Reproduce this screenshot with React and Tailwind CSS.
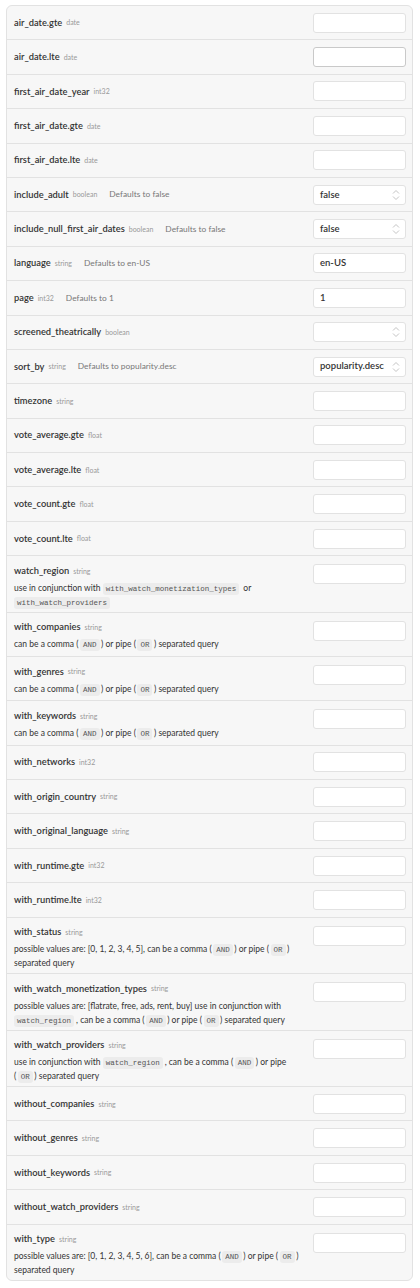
import { Fragment } from 'react';

const AND_OR = ['can be a comma ', { paren: 'AND' }, ' or pipe ', { paren: 'OR' }, ' separated query'];

const rows = [
  { name: 'air_date.gte', type: 'date' },
  { name: 'air_date.lte', type: 'date', hover: true },
  { name: 'first_air_date_year', type: 'int32' },
  { name: 'first_air_date.gte', type: 'date' },
  { name: 'first_air_date.lte', type: 'date' },
  { name: 'include_adult', type: 'boolean', def: 'false', select: 'false' },
  { name: 'include_null_first_air_dates', type: 'boolean', def: 'false', select: 'false' },
  { name: 'language', type: 'string', def: 'en-US', value: 'en-US' },
  { name: 'page', type: 'int32', def: '1', value: '1' },
  { name: 'screened_theatrically', type: 'boolean', select: '' },
  { name: 'sort_by', type: 'string', def: 'popularity.desc', select: 'popularity.desc' },
  { name: 'timezone', type: 'string' },
  { name: 'vote_average.gte', type: 'float' },
  { name: 'vote_average.lte', type: 'float' },
  { name: 'vote_count.gte', type: 'float' },
  { name: 'vote_count.lte', type: 'float' },
  { name: 'watch_region', type: 'string', desc: ['use in conjunction with ', { code: 'with_watch_monetization_types' }, ' or ', { code: 'with_watch_providers' }] },
  { name: 'with_companies', type: 'string', desc: AND_OR },
  { name: 'with_genres', type: 'string', desc: AND_OR },
  { name: 'with_keywords', type: 'string', desc: AND_OR },
  { name: 'with_networks', type: 'int32' },
  { name: 'with_origin_country', type: 'string' },
  { name: 'with_original_language', type: 'string' },
  { name: 'with_runtime.gte', type: 'int32' },
  { name: 'with_runtime.lte', type: 'int32' },
  { name: 'with_status', type: 'string', desc: ['possible values are: [0, 1, 2, 3, 4, 5], ', ...AND_OR] },
  { name: 'with_watch_monetization_types', type: 'string', desc: ['possible values are: [flatrate, free, ads, rent, buy] use in conjunction with ', { code: 'watch_region' }, ', ', ...AND_OR] },
  { name: 'with_watch_providers', type: 'string', desc: ['use in conjunction with ', { code: 'watch_region' }, ', ', ...AND_OR] },
  { name: 'without_companies', type: 'string' },
  { name: 'without_genres', type: 'string' },
  { name: 'without_keywords', type: 'string' },
  { name: 'without_watch_providers', type: 'string' },
  { name: 'with_type', type: 'string', desc: ['possible values are: [0, 1, 2, 3, 4, 5, 6], ', ...AND_OR] },
];

function Chevrons() {
  return (
    <svg width="8" height="12" viewBox="0 0 8 12" fill="none" stroke="#c4c4c4" strokeWidth="1" className="shrink-0">
      <path d="M1 4.5 L4 1.5 L7 4.5" />
      <path d="M1 7.5 L4 10.5 L7 7.5" />
    </svg>
  );
}

function Field({ row }) {
  const base = 'flex h-[20px] w-[93px] shrink-0 items-center rounded-[3px] border bg-white pl-[6px] pr-[5px] text-[9.5px] text-[#333]';
  if (row.select !== undefined) {
    return (
      <div className={base + ' justify-between border-[#e2e2e2]'}>
        <span className="font-semibold">{row.select}</span>
        <Chevrons />
      </div>
    );
  }
  return (
    <div className={base + (row.hover ? ' border-[#c9c9c9]' : ' border-[#e2e2e2]')}>
      <span className="font-semibold">{row.value}</span>
    </div>
  );
}

function Code({ children, className = '' }) {
  return (
    <code className={"rounded-[3px] bg-[#ececec] px-[3px] py-[2px] font-['Liberation_Mono',monospace] text-[7.5px] leading-none text-[#555] " + className}>
      {children}
    </code>
  );
}

function Desc({ parts }) {
  return (
    <div className="text-[8.5px] leading-[14px] text-[#333]">
      {parts.map((p, i) => {
        if (typeof p === 'string') return <Fragment key={i}>{p}</Fragment>;
        if (p.paren)
          return (
            <span key={i} className="whitespace-nowrap">
              (<Code className="mx-[1.5px]">{p.paren}</Code>)
            </span>
          );
        return <Code key={i} className="mr-[2px]">{p.code}</Code>;
      })}
    </div>
  );
}

export default function App() {
  return (
    <div className="min-h-screen bg-white pl-[6px] pr-[7px] pt-[5px] font-['Lato',sans-serif]">
      <div className="overflow-hidden rounded-[6px] border border-[#e2e2e2] bg-[#f7f7f7]">
        {rows.map((row, i) => (
          <div
            key={row.name}
            className={
              'flex justify-between pl-[7px] pr-[6px] ' +
              (i < rows.length - 1 ? 'border-b border-[#e2e2e2] ' : '') +
              (row.desc ? 'items-start pb-[3px] pt-[4.5px]' : 'h-[34.4px] items-center')
            }
          >
            <div className={row.desc ? 'min-w-0 flex-1 pr-[10px]' : 'min-w-0 flex-1'}>
              <div className="flex h-[20px] items-center whitespace-nowrap">
                <span className="text-[9.3px] font-semibold text-[#333]">{row.name}</span>
                <span className="ml-[4px] text-[7px] text-[#999]">{row.type}</span>
                {row.def && <span className="ml-[12px] text-[8.4px] text-[#777]">Defaults to {row.def}</span>}
              </div>
              {row.desc && <Desc parts={row.desc} />}
            </div>
            <div className={row.desc ? 'pb-[12.3px] pt-[3.5px]' : ''}>
              <Field row={row} />
            </div>
          </div>
        ))}
      </div>
    </div>
  );
}
